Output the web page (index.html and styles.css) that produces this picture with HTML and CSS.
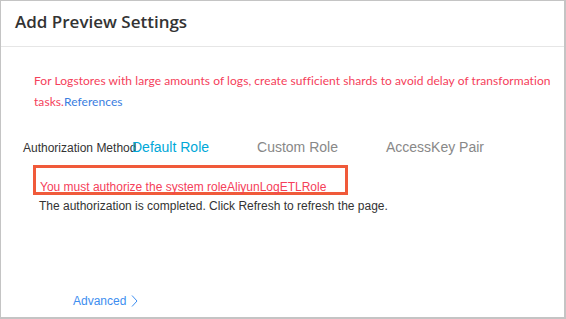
FILE: index.html
```html
<!DOCTYPE html>
<html lang="en">
<head>
  <meta charset="UTF-8">
  <meta name="viewport" content="width=device-width, initial-scale=1.0">
  <title>Add Preview Settings</title>
  <link rel="stylesheet" href="styles.css">
</head>
<body>
  <div class="dialog">
    <div class="dialog-header">
      <h2>Add Preview Settings</h2>
    </div>
    <div class="dialog-body">
      <p class="notice">For Logstores with large amounts of logs, create sufficient shards to avoid delay of transformation tasks.<a href="#">References</a></p>

      <div class="auth-row">
        <span class="auth-label">Authorization Method</span>
        <div class="tabs">
          <span class="tab active">Default Role</span>
          <span class="tab">Custom Role</span>
          <span class="tab">AccessKey Pair</span>
        </div>
      </div>

      <div class="warn-box">You must authorize the system roleAliyunLogETLRole</div>
      <p class="hint">The authorization is completed. Click Refresh to refresh the page.</p>

      <a class="advanced" href="#">Advanced
        <svg width="7" height="12" viewBox="0 0 7 12"><path d="M1 0.5 L6 6 L1 11.5" fill="none" stroke="#3d8ef0" stroke-width="1"/></svg>
      </a>
    </div>
  </div>
</body>
</html>
```

FILE: styles.css
```css
html, body {
  margin: 0;
  padding: 0;
}

body {
  font-family: "Liberation Sans", Arial, sans-serif;
  background: #fff;
}

.dialog {
  box-sizing: border-box;
  width: 566px;
  height: 319px;
  border: 1px solid #c4c4c4;
  border-right-width: 2px;
  border-bottom-width: 2px;
  display: flex;
  flex-direction: column;
}

.dialog-header {
  box-sizing: border-box;
  height: 46px;
  border-bottom: 1px solid #e6e6e6;
  padding: 9px 0 0 14px;
}
.dialog-header h2 {
  margin: 0;
  font-family: "Open Sans", sans-serif;
  font-weight: 600;
  font-size: 17px;
  line-height: 24px;
  color: #333;
}

.dialog-body {
  flex: 1;
  position: relative;
}

.notice {
  margin: 23px 8px 0 33px;
  font-family: Lato, sans-serif;
  font-size: 12px;
  letter-spacing: 0.06px;
  line-height: 21px;
  color: #f5405a;
}
.notice a {
  color: #3a7ddf;
  text-decoration: none;
}

.auth-row {
  display: flex;
  align-items: baseline;
  margin: 27px 0 0 22px;
}
.auth-label {
  width: 109px;
  white-space: nowrap;
  font-size: 12px;
  color: #333;
}
.tabs {
  display: flex;
  gap: 48px;
}
.tab {
  font-size: 14px;
  color: #888;
}
.tab.active {
  color: #00a8d8;
}

.warn-box {
  box-sizing: border-box;
  width: 315px;
  height: 30px;
  margin: 10px 0 0 32px;
  border: 3px solid #f05a3a;
  padding: 12px 0 0 4px;
  font-size: 12px;
  line-height: 14px;
  color: #f5405a;
}

.hint {
  margin: 4px 0 0 38px;
  font-size: 12px;
  color: #333;
}

.advanced {
  position: absolute;
  left: 72px;
  bottom: 9px;
  font-size: 12px;
  color: #3d8ef0;
  text-decoration: none;
  display: flex;
  align-items: center;
  gap: 5px;
}
```
